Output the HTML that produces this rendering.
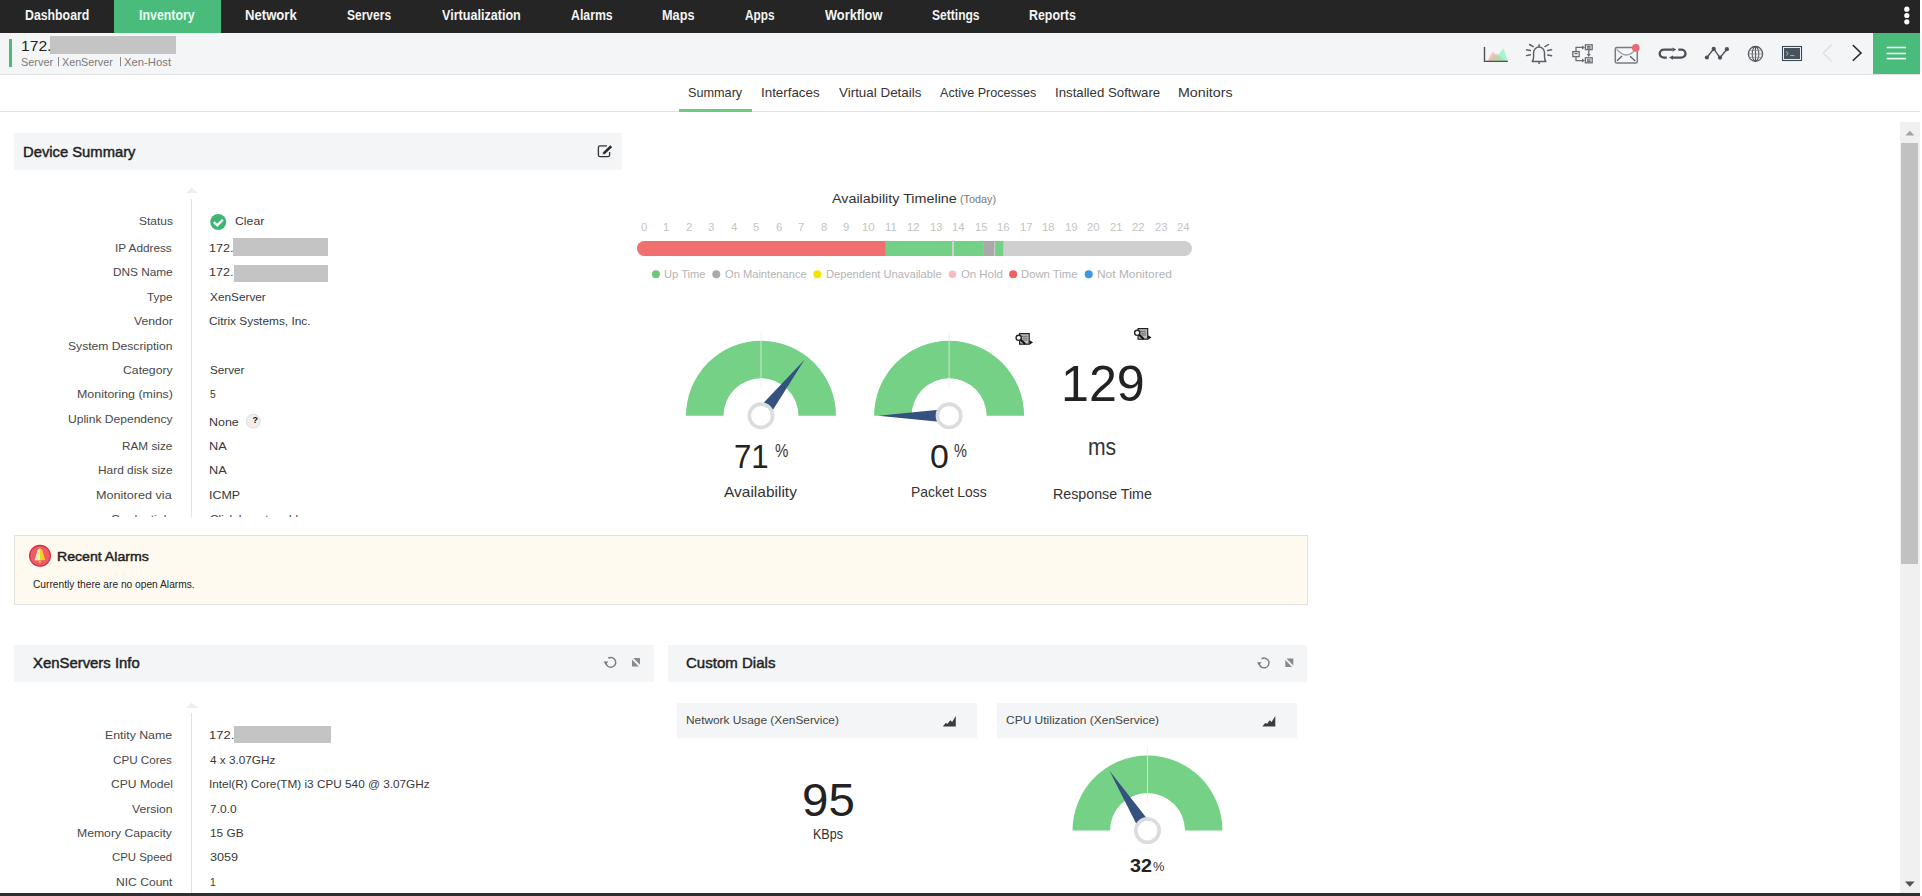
<!DOCTYPE html>
<html><head><meta charset="utf-8"><title>OpManager - Inventory</title>
<style>
*{margin:0;padding:0;box-sizing:border-box}
html,body{width:1922px;height:896px;overflow:hidden;background:#fff;font-family:"Liberation Sans",sans-serif}
.a{position:absolute}
.t{position:absolute;white-space:nowrap;line-height:1.117;transform-origin:0 0}
#nav{left:0;top:0;width:1920px;height:33px;background:#252525}
#navact{left:114px;top:0;width:107px;height:33px;background:#49bb7b}
#sub{left:0;top:33px;width:1920px;height:42px;background:#f4f5f7;border-bottom:1px solid #dfe0e2}
#tabs{left:0;top:75px;width:1920px;height:37px;background:#fff;border-bottom:1px solid #e2e2e2}
.hdr{background:#f4f5f7}
.redact{background:#c4c4c4}
svg{position:absolute;left:0;top:0;overflow:visible}
</style></head>
<body>
<div id="nav" class="a"></div>
<div id="navact" class="a"></div>
<div id="sub" class="a"></div>
<div class="a" style="left:9px;top:39px;width:3px;height:28px;background:#4dba7c"></div>
<div class="a redact" style="left:50px;top:36px;width:126px;height:17.5px"></div>
<div class="a" style="left:1873px;top:33px;width:47px;height:41px;background:#49bb7b"></div>
<div id="tabs" class="a"></div>
<div class="a" style="left:679px;top:109px;width:73px;height:3px;background:#6dcb7f"></div>

<!-- Device summary -->
<div class="a hdr" style="left:14px;top:133px;width:608px;height:37px"></div>
<div class="a" style="left:191px;top:199px;width:1px;height:318px;background:#e2e2e2"></div>
<div class="a redact" style="left:232.6px;top:238.2px;width:95.2px;height:17.4px"></div>
<div class="a redact" style="left:234px;top:265.1px;width:93.8px;height:16.8px"></div>

<!-- Alarms -->
<div class="a" style="left:14px;top:535px;width:1294px;height:70px;background:#fffaf0;border:1px solid #e4e1da"></div>

<!-- Xenservers -->
<div class="a hdr" style="left:14px;top:645px;width:639.5px;height:36.5px"></div>
<div class="a" style="left:191px;top:713px;width:1px;height:183px;background:#e2e2e2"></div>
<div class="a redact" style="left:233.6px;top:726.1px;width:97.4px;height:16.6px"></div>

<!-- Custom dials -->
<div class="a hdr" style="left:668px;top:645px;width:639px;height:36.5px"></div>
<div class="a hdr" style="left:677px;top:703px;width:300px;height:35px"></div>
<div class="a hdr" style="left:997px;top:703px;width:300px;height:35px"></div>

<!-- scrollbar -->
<div class="a" style="left:1900px;top:122px;width:20px;height:771px;background:#f0f0f0"></div>
<div class="a" style="left:1901px;top:143px;width:17px;height:421px;background:#c1c1c1"></div>
<div class="a" style="left:0;top:893px;width:1920px;height:3px;background:#2f2f2f"></div>

<div class="t" style="left:24.86px;top:8.33px;font-size:14px;color:#f4f4f4;font-weight:bold;transform:scaleX(0.8792);">Dashboard</div>
<div class="t" style="left:245.21px;top:8.33px;font-size:14px;color:#f4f4f4;font-weight:bold;transform:scaleX(0.9367);">Network</div>
<div class="t" style="left:347.36px;top:8.33px;font-size:14px;color:#f4f4f4;font-weight:bold;transform:scaleX(0.8578);">Servers</div>
<div class="t" style="left:442.00px;top:8.33px;font-size:14px;color:#f4f4f4;font-weight:bold;transform:scaleX(0.8987);">Virtualization</div>
<div class="t" style="left:570.75px;top:8.33px;font-size:14px;color:#f4f4f4;font-weight:bold;transform:scaleX(0.8783);">Alarms</div>
<div class="t" style="left:661.94px;top:8.33px;font-size:14px;color:#f4f4f4;font-weight:bold;transform:scaleX(0.9088);">Maps</div>
<div class="t" style="left:744.56px;top:8.33px;font-size:14px;color:#f4f4f4;font-weight:bold;transform:scaleX(0.8418);">Apps</div>
<div class="t" style="left:824.80px;top:8.33px;font-size:14px;color:#f4f4f4;font-weight:bold;transform:scaleX(0.9144);">Workflow</div>
<div class="t" style="left:932.26px;top:8.33px;font-size:14px;color:#f4f4f4;font-weight:bold;transform:scaleX(0.8615);">Settings</div>
<div class="t" style="left:1029.26px;top:8.33px;font-size:14px;color:#f4f4f4;font-weight:bold;transform:scaleX(0.8846);">Reports</div>
<div class="t" style="left:139.26px;top:8.33px;font-size:14px;color:#e8fff0;font-weight:bold;transform:scaleX(0.8839);">Inventory</div>
<div class="t" style="left:21.20px;top:38.12px;font-size:15px;color:#222;transform:scaleX(1.0437);">172.</div>
<div class="t" style="left:21.46px;top:56.45px;font-size:11px;color:#7a7a7a;transform:scaleX(0.9932);">Server</div>
<div class="t" style="left:62.09px;top:56.45px;font-size:11px;color:#7a7a7a;transform:scaleX(0.9766);">XenServer</div>
<div class="t" style="left:124.07px;top:56.45px;font-size:11px;color:#7a7a7a;transform:scaleX(1.0272);">Xen-Host</div>
<div class="t" style="left:687.79px;top:85.48px;font-size:13.5px;color:#333;transform:scaleX(0.9385);">Summary</div>
<div class="t" style="left:760.80px;top:85.48px;font-size:13.5px;color:#333;transform:scaleX(0.9886);">Interfaces</div>
<div class="t" style="left:839.00px;top:85.48px;font-size:13.5px;color:#333;transform:scaleX(0.9924);">Virtual Details</div>
<div class="t" style="left:940.00px;top:85.48px;font-size:13.5px;color:#333;transform:scaleX(0.9308);">Active Processes</div>
<div class="t" style="left:1054.81px;top:85.48px;font-size:13.5px;color:#333;transform:scaleX(0.9801);">Installed Software</div>
<div class="t" style="left:1177.86px;top:85.48px;font-size:13.5px;color:#333;transform:scaleX(1.0541);">Monitors</div>
<div class="t" style="left:23.22px;top:143.72px;font-size:15px;color:#222;-webkit-text-stroke:0.45px currentColor;transform:scaleX(0.9850);">Device Summary</div>
<div class="t" style="left:138.62px;top:215.29px;font-size:11.5px;color:#484848;transform:scaleX(1.0410);">Status</div>
<div class="t" style="left:114.94px;top:241.99px;font-size:11.5px;color:#484848;transform:scaleX(1.0243);">IP Address</div>
<div class="t" style="left:112.96px;top:266.09px;font-size:11.5px;color:#484848;transform:scaleX(1.0261);">DNS Name</div>
<div class="t" style="left:147.17px;top:290.79px;font-size:11.5px;color:#484848;transform:scaleX(1.0212);">Type</div>
<div class="t" style="left:133.60px;top:314.89px;font-size:11.5px;color:#484848;transform:scaleX(1.0634);">Vendor</div>
<div class="t" style="left:68.41px;top:340.39px;font-size:11.5px;color:#484848;transform:scaleX(1.0546);">System Description</div>
<div class="t" style="left:122.59px;top:364.29px;font-size:11.5px;color:#484848;transform:scaleX(1.0632);">Category</div>
<div class="t" style="left:76.91px;top:387.89px;font-size:11.5px;color:#484848;transform:scaleX(1.0802);">Monitoring (mins)</div>
<div class="t" style="left:67.66px;top:412.99px;font-size:11.5px;color:#484848;transform:scaleX(1.0483);">Uplink Dependency</div>
<div class="t" style="left:122.26px;top:440.19px;font-size:11.5px;color:#484848;transform:scaleX(1.0237);">RAM size</div>
<div class="t" style="left:98.05px;top:463.89px;font-size:11.5px;color:#484848;transform:scaleX(1.0327);">Hard disk size</div>
<div class="t" style="left:96.49px;top:488.89px;font-size:11.5px;color:#484848;transform:scaleX(1.0960);">Monitored via</div>
<div class="t" style="left:234.89px;top:215.29px;font-size:11.5px;color:#383838;transform:scaleX(1.0652);">Clear</div>
<div class="t" style="left:209.12px;top:241.99px;font-size:11.5px;color:#383838;transform:scaleX(1.0988);">172.</div>
<div class="t" style="left:209.12px;top:266.09px;font-size:11.5px;color:#383838;transform:scaleX(1.0988);">172.</div>
<div class="t" style="left:209.76px;top:290.79px;font-size:11.5px;color:#383838;transform:scaleX(1.0268);">XenServer</div>
<div class="t" style="left:209.41px;top:314.89px;font-size:11.5px;color:#383838;transform:scaleX(1.0319);">Citrix Systems, Inc.</div>
<div class="t" style="left:209.83px;top:364.29px;font-size:11.5px;color:#383838;transform:scaleX(1.0192);">Server</div>
<div class="t" style="left:210.09px;top:387.89px;font-size:11.5px;color:#383838;transform:scaleX(0.9000);">5</div>
<div class="t" style="left:209.30px;top:415.89px;font-size:11.5px;color:#383838;transform:scaleX(1.0820);">None</div>
<div class="t" style="left:209.28px;top:440.19px;font-size:11.5px;color:#383838;transform:scaleX(1.1067);">NA</div>
<div class="t" style="left:209.28px;top:463.89px;font-size:11.5px;color:#383838;transform:scaleX(1.1067);">NA</div>
<div class="t" style="left:209.18px;top:488.89px;font-size:11.5px;color:#383838;transform:scaleX(1.0819);">ICMP</div>
<div class="t" style="left:111.09px;top:513.29px;font-size:11.5px;color:#484848;transform:scaleX(1.0568);">Credentials</div>
<div class="t" style="left:209.71px;top:513.29px;font-size:11.5px;color:#383838;transform:scaleX(1.0191);">Click here to add</div>
<div class="t" style="left:832.40px;top:191.28px;font-size:13.5px;color:#333;transform:scaleX(1.0613);">Availability Timeline</div>
<div class="t" style="left:959.75px;top:194.00px;font-size:10.5px;color:#777;transform:scaleX(1.0288);">(Today)</div>
<div class="t" style="left:640.68px;top:220.54px;font-size:11px;color:#c4c4c4;transform:scaleX(1.0300);">0</div>
<div class="t" style="left:663.01px;top:220.54px;font-size:11px;color:#c4c4c4;transform:scaleX(1.0300);">1</div>
<div class="t" style="left:685.63px;top:220.54px;font-size:11px;color:#c4c4c4;transform:scaleX(1.0300);">2</div>
<div class="t" style="left:708.18px;top:220.54px;font-size:11px;color:#c4c4c4;transform:scaleX(1.0300);">3</div>
<div class="t" style="left:730.68px;top:220.54px;font-size:11px;color:#c4c4c4;transform:scaleX(1.0300);">4</div>
<div class="t" style="left:753.13px;top:220.54px;font-size:11px;color:#c4c4c4;transform:scaleX(1.0300);">5</div>
<div class="t" style="left:775.57px;top:220.54px;font-size:11px;color:#c4c4c4;transform:scaleX(1.0300);">6</div>
<div class="t" style="left:798.13px;top:220.54px;font-size:11px;color:#c4c4c4;transform:scaleX(1.0300);">7</div>
<div class="t" style="left:820.63px;top:220.54px;font-size:11px;color:#c4c4c4;transform:scaleX(1.0300);">8</div>
<div class="t" style="left:843.18px;top:220.54px;font-size:11px;color:#c4c4c4;transform:scaleX(1.0300);">9</div>
<div class="t" style="left:862.31px;top:220.54px;font-size:11px;color:#c4c4c4;transform:scaleX(1.0300);">10</div>
<div class="t" style="left:885.28px;top:220.54px;font-size:11px;color:#c4c4c4;transform:scaleX(1.0300);">11</div>
<div class="t" style="left:907.36px;top:220.54px;font-size:11px;color:#c4c4c4;transform:scaleX(1.0300);">12</div>
<div class="t" style="left:929.81px;top:220.54px;font-size:11px;color:#c4c4c4;transform:scaleX(1.0300);">13</div>
<div class="t" style="left:952.25px;top:220.54px;font-size:11px;color:#c4c4c4;transform:scaleX(1.0300);">14</div>
<div class="t" style="left:974.81px;top:220.54px;font-size:11px;color:#c4c4c4;transform:scaleX(1.0300);">15</div>
<div class="t" style="left:997.31px;top:220.54px;font-size:11px;color:#c4c4c4;transform:scaleX(1.0300);">16</div>
<div class="t" style="left:1019.86px;top:220.54px;font-size:11px;color:#c4c4c4;transform:scaleX(1.0300);">17</div>
<div class="t" style="left:1042.31px;top:220.54px;font-size:11px;color:#c4c4c4;transform:scaleX(1.0300);">18</div>
<div class="t" style="left:1064.86px;top:220.54px;font-size:11px;color:#c4c4c4;transform:scaleX(1.0300);">19</div>
<div class="t" style="left:1087.42px;top:220.54px;font-size:11px;color:#c4c4c4;transform:scaleX(1.0300);">20</div>
<div class="t" style="left:1109.98px;top:220.54px;font-size:11px;color:#c4c4c4;transform:scaleX(1.0300);">21</div>
<div class="t" style="left:1132.48px;top:220.54px;font-size:11px;color:#c4c4c4;transform:scaleX(1.0300);">22</div>
<div class="t" style="left:1154.92px;top:220.54px;font-size:11px;color:#c4c4c4;transform:scaleX(1.0300);">23</div>
<div class="t" style="left:1177.36px;top:220.54px;font-size:11px;color:#c4c4c4;transform:scaleX(1.0300);">24</div>
<div class="t" style="left:664.02px;top:267.75px;font-size:11px;color:#b4b4b4;transform:scaleX(1.0154);">Up Time</div>
<div class="t" style="left:724.75px;top:267.75px;font-size:11px;color:#b4b4b4;transform:scaleX(1.0115);">On Maintenance</div>
<div class="t" style="left:825.81px;top:267.75px;font-size:11px;color:#b4b4b4;transform:scaleX(1.0108);">Dependent Unavailable</div>
<div class="t" style="left:960.74px;top:267.75px;font-size:11px;color:#b4b4b4;transform:scaleX(1.0357);">On Hold</div>
<div class="t" style="left:1021.30px;top:267.75px;font-size:11px;color:#b4b4b4;transform:scaleX(1.0253);">Down Time</div>
<div class="t" style="left:1096.75px;top:267.75px;font-size:11px;color:#b4b4b4;transform:scaleX(1.0845);">Not Monitored</div>
<div class="t" style="left:734.04px;top:438.94px;font-size:33px;color:#222;transform:scaleX(0.9453);">71</div>
<div class="t" style="left:774.75px;top:440.71px;font-size:18px;color:#333;transform:scaleX(0.8367);">%</div>
<div class="t" style="left:929.98px;top:438.94px;font-size:33px;color:#222;transform:scaleX(1.0266);">0</div>
<div class="t" style="left:953.96px;top:440.71px;font-size:18px;color:#333;transform:scaleX(0.8099);">%</div>
<div class="t" style="left:724.30px;top:484.43px;font-size:15px;color:#333;transform:scaleX(1.0327);">Availability</div>
<div class="t" style="left:910.79px;top:484.43px;font-size:15px;color:#333;transform:scaleX(0.9268);">Packet Loss</div>
<div class="t" style="left:1061.49px;top:356.85px;font-size:50px;color:#222;transform:scaleX(1.0037);">129</div>
<div class="t" style="left:1087.63px;top:435.19px;font-size:23px;color:#333;transform:scaleX(0.9199);">ms</div>
<div class="t" style="left:1052.66px;top:484.97px;font-size:15.5px;color:#333;transform:scaleX(0.9183);">Response Time</div>
<div class="t" style="left:56.67px;top:548.98px;font-size:13.5px;color:#222;-webkit-text-stroke:0.45px currentColor;transform:scaleX(1.0455);">Recent Alarms</div>
<div class="t" style="left:32.69px;top:578.85px;font-size:10px;color:#222;transform:scaleX(1.0204);">Currently there are no open Alarms.</div>
<div class="t" style="left:33.10px;top:655.02px;font-size:15px;color:#222;-webkit-text-stroke:0.45px currentColor;transform:scaleX(0.9924);">XenServers Info</div>
<div class="t" style="left:105.42px;top:729.49px;font-size:11.5px;color:#484848;transform:scaleX(1.0702);">Entity Name</div>
<div class="t" style="left:209.49px;top:729.49px;font-size:11.5px;color:#383838;transform:scaleX(1.1280);">172.</div>
<div class="t" style="left:113.42px;top:754.39px;font-size:11.5px;color:#484848;transform:scaleX(1.0134);">CPU Cores</div>
<div class="t" style="left:210.17px;top:754.39px;font-size:11.5px;color:#383838;transform:scaleX(1.0217);">4 x 3.07GHz</div>
<div class="t" style="left:110.79px;top:778.39px;font-size:11.5px;color:#484848;transform:scaleX(1.0538);">CPU Model</div>
<div class="t" style="left:209.34px;top:778.39px;font-size:11.5px;color:#383838;transform:scaleX(1.0236);">Intel(R) Core(TM) i3 CPU 540 @ 3.07GHz</div>
<div class="t" style="left:132.20px;top:803.29px;font-size:11.5px;color:#484848;transform:scaleX(1.0554);">Version</div>
<div class="t" style="left:209.80px;top:803.29px;font-size:11.5px;color:#383838;transform:scaleX(1.0412);">7.0.0</div>
<div class="t" style="left:77.12px;top:827.49px;font-size:11.5px;color:#484848;transform:scaleX(1.0604);">Memory Capacity</div>
<div class="t" style="left:209.57px;top:827.49px;font-size:11.5px;color:#383838;transform:scaleX(1.0334);">15 GB</div>
<div class="t" style="left:112.43px;top:851.09px;font-size:11.5px;color:#484848;transform:scaleX(0.9915);">CPU Speed</div>
<div class="t" style="left:210.02px;top:851.09px;font-size:11.5px;color:#383838;transform:scaleX(1.1009);">3059</div>
<div class="t" style="left:115.53px;top:876.39px;font-size:11.5px;color:#484848;transform:scaleX(1.0513);">NIC Count</div>
<div class="t" style="left:209.68px;top:876.39px;font-size:11.5px;color:#383838;transform:scaleX(0.9000);">1</div>
<div class="t" style="left:686.05px;top:655.02px;font-size:15px;color:#222;-webkit-text-stroke:0.45px currentColor;transform:scaleX(1.0024);">Custom Dials</div>
<div class="t" style="left:685.65px;top:714.29px;font-size:11.5px;color:#444;transform:scaleX(1.0310);">Network Usage (XenService)</div>
<div class="t" style="left:1005.60px;top:714.29px;font-size:11.5px;color:#444;transform:scaleX(1.0411);">CPU Utilization (XenService)</div>
<div class="t" style="left:801.60px;top:774.37px;font-size:47px;color:#222;transform:scaleX(1.0103);">95</div>
<div class="t" style="left:812.90px;top:827.13px;font-size:14px;color:#333;transform:scaleX(0.8959);">KBps</div>
<div class="t" style="left:1130.21px;top:856.01px;font-size:18px;color:#222;font-weight:bold;transform:scaleX(1.0941);">32</div>
<div class="t" style="left:1153.37px;top:860.99px;font-size:12.5px;color:#333;transform:scaleX(1.0265);">%</div>
<div class="a" style="left:14px;top:517px;width:640px;height:18px;background:#fff"></div>

<svg width="1922" height="896" viewBox="0 0 1922 896">
<path d="M686,415.8 A75,75 0 0 1 836,415.8 L798.5,415.8 A37.5,37.5 0 0 0 723.5,415.8 Z" fill="#74d186"/><line x1="761" y1="331.8" x2="761" y2="387.8" stroke="#ececec" stroke-width="1" opacity="0.75"/><polygon points="804.52,359.70 755.47,411.51 766.53,420.09" fill="#34517f"/><circle cx="761" cy="415.8" r="11.7" fill="#fff" stroke="#dcdcdc" stroke-width="3.6"/><path d="M874.1,415.8 A75,75 0 0 1 1024.1,415.8 L986.6,415.8 A37.5,37.5 0 0 0 911.6,415.8 Z" fill="#74d186"/><line x1="949.1" y1="331.8" x2="949.1" y2="387.8" stroke="#ececec" stroke-width="1" opacity="0.75"/><polygon points="878.10,415.80 949.10,422.80 949.10,408.80" fill="#34517f"/><circle cx="949.1" cy="415.8" r="11.7" fill="#fff" stroke="#dcdcdc" stroke-width="3.6"/><path d="M1072.5,830.6 A75,75 0 0 1 1222.5,830.6 L1185.0,830.6 A37.5,37.5 0 0 0 1110.0,830.6 Z" fill="#74d186"/><line x1="1147.5" y1="746.6" x2="1147.5" y2="802.6" stroke="#ececec" stroke-width="1" opacity="0.75"/><polygon points="1109.46,770.65 1141.59,834.35 1153.41,826.85" fill="#34517f"/><circle cx="1147.5" cy="830.6" r="11.7" fill="#fff" stroke="#dcdcdc" stroke-width="3.6"/><!-- nav three dots -->
<circle cx="1906.8" cy="9.2" r="2.6" fill="#fff"/>
<circle cx="1906.8" cy="15.5" r="2.6" fill="#fff"/>
<circle cx="1906.8" cy="21.8" r="2.6" fill="#fff"/>
<!-- subheader separators -->
<line x1="58.5" y1="57" x2="58.5" y2="66.3" stroke="#8a8a8a" stroke-width="1"/>
<line x1="120.5" y1="57" x2="120.5" y2="66.3" stroke="#8a8a8a" stroke-width="1"/>
<!-- icon1 chart -->
<polygon points="1487.2,61 1493,51.6 1500,61" fill="#f9c2c2"/>
<polygon points="1493,61 1503.4,48.4 1508,61" fill="#a9f3cf"/>
<polygon points="1488.5,61 1496.5,53.4 1505.5,61" fill="#bccb98" opacity="0.6"/>
<path d="M1484.5,47 V61.4 H1507.8" fill="none" stroke="#4f4f4f" stroke-width="1.4"/>
<!-- icon2 bell -->
<g fill="none" stroke="#5b5f66" stroke-width="1.45" stroke-linecap="round">
<path d="M1532.2,61.5 Q1533.6,60 1533.6,56.5 V52.6 A5.45,5.6 0 0 1 1544.5,52.6 V56.5 Q1544.5,60 1545.9,61.5 Z" stroke-linejoin="round"/>
<path d="M1529.6,44.5 L1533.2,46.6 M1526.5,49.8 L1530.4,50.5 M1526.5,55.6 L1530.4,54.7 M1548.5,44.5 L1545,46.6 M1551.6,49.8 L1547.7,50.5 M1551.6,55.8 L1547.7,55"/>
</g>
<rect x="1538.3" y="44.3" width="1.6" height="2.4" fill="#5b5f66"/>
<rect x="1538.2" y="62.2" width="1.8" height="1.6" fill="#5b5f66"/>
<!-- icon3 flow -->
<g fill="none" stroke="#6a6e74" stroke-width="1.3">
<rect x="1572.8" y="51.6" width="6.4" height="5" />
<rect x="1585.4" y="44.8" width="6.8" height="4.8" />
<rect x="1585.4" y="57.8" width="6.8" height="5" />
<path d="M1574.5,53.6 H1577.5 M1587,46.6 H1590.6 M1587,48.2 H1590.6 M1587,59.8 H1590.6 M1587,61.4 H1590.6"/>
<path d="M1576,51.4 V47.4 H1582.5 M1576,56.8 V60.6 H1582.5 M1588.8,49.8 V54.5"/>
</g>
<polygon points="1582,45.4 1585,47.4 1582,49.4" fill="#6a6e74"/>
<polygon points="1582,58.6 1585,60.6 1582,62.6" fill="#6a6e74"/>
<polygon points="1586.8,54 1590.8,54 1588.8,57" fill="#6a6e74"/>
<!-- icon4 mail -->
<rect x="1615.3" y="47.6" width="22" height="15.4" rx="1.6" fill="none" stroke="#777b81" stroke-width="1.5"/>
<path d="M1616.8,49.4 Q1626.3,60.6 1635.6,49.4" fill="none" stroke="#9a9ea4" stroke-width="1.3"/>
<path d="M1617.1,60.8 L1622,56 M1635.2,61 L1630.1,56.2" fill="none" stroke="#5a5e64" stroke-width="1.3"/>
<circle cx="1635.8" cy="47.9" r="3.8" fill="#ea6a70"/>
<!-- icon5 loop -->
<g fill="none" stroke="#4b5159" stroke-width="2.4">
<path d="M1672.2,49.6 H1664 A4.3,4 0 0 0 1664,57.6 H1666.8"/>
<path d="M1678.3,49.6 H1681.2 A4.3,4 0 0 1 1681.2,57.6 H1672"/>
</g>
<polygon points="1672.4,47.4 1676.3,49.6 1672.4,51.8" fill="#4b5159"/>
<polygon points="1673,55.4 1669,57.6 1673,59.8" fill="#4b5159"/>
<!-- icon6 line graph -->
<polyline points="1706.9,57.5 1713.7,48.9 1720,57.7 1726.9,49.2" fill="none" stroke="#4b5159" stroke-width="1.4"/>
<circle cx="1706.9" cy="57.5" r="2.1" fill="#4b5159"/>
<circle cx="1713.7" cy="48.9" r="2.1" fill="#4b5159"/>
<circle cx="1720" cy="57.7" r="2.1" fill="#4b5159"/>
<circle cx="1726.9" cy="49.2" r="2.1" fill="#4b5159"/>
<!-- icon7 globe -->
<g fill="none" stroke="#55595f">
<ellipse cx="1755.5" cy="53.9" rx="7.1" ry="7.4" stroke-width="1.3"/>
<ellipse cx="1755.5" cy="53.9" rx="3.3" ry="7.3" stroke-width="1.1"/>
<path d="M1755.5,46.6 V61.2" stroke-width="1.2"/>
<path d="M1749,50.4 H1762 M1748.4,53.9 H1762.6 M1749,57.4 H1762" stroke-width="0.7" stroke="#7a7e84"/>
</g>
<!-- icon8 terminal -->
<rect x="1782.5" y="46.5" width="19" height="14" fill="none" stroke="#3e4852" stroke-width="1.1"/>
<rect x="1784" y="48" width="16" height="11" fill="#46535f"/>
<path d="M1786,51.5 L1788.3,53.5 L1786,55.5" fill="none" stroke="#b9c3ca" stroke-width="0.9"/>
<line x1="1790.2" y1="55.6" x2="1794.4" y2="55.6" stroke="#b9c3ca" stroke-width="0.9"/>
<!-- chevrons -->
<polyline points="1831.8,44.6 1823.2,53.1 1831.8,61.6" fill="none" stroke="#dedede" stroke-width="1.4"/>
<polyline points="1852.8,45 1861,53 1852.8,60.8" fill="none" stroke="#222" stroke-width="1.5"/>
<!-- hamburger -->
<g stroke="#f0fff5" stroke-width="1.6">
<line x1="1886.6" y1="47.5" x2="1906" y2="47.5"/>
<line x1="1886.6" y1="53.5" x2="1906" y2="53.5"/>
<line x1="1886.6" y1="58.6" x2="1906" y2="58.6"/>
</g>
<!-- edit icon -->
<path d="M607,145.8 H600 Q598.4,145.8 598.4,147.4 V155 Q598.4,156.6 600,156.6 H608 Q609.6,156.6 609.6,155 V152" fill="none" stroke="#333" stroke-width="1.3"/>
<path d="M603.5,153.6 L611.2,146.2" stroke="#2a2a2a" stroke-width="2.6"/>
<polygon points="602.6,154.6 603.4,151.8 605.2,153.6" fill="#4a4a2a"/>
<!-- triangle markers -->
<polygon points="191.6,187.4 186.4,193 198,193" fill="#efefef"/>
<polygon points="191.6,702.4 186.4,708 198,708" fill="#efefef"/>
<!-- status check -->
<circle cx="218.2" cy="222" r="8" fill="#3fb574"/>
<polyline points="213.8,222.2 217.2,225.4 222.8,219.8" fill="none" stroke="#fff" stroke-width="2.3"/>
<!-- question circle -->
<circle cx="253.3" cy="421.2" r="7" fill="#efefef" stroke="#e0e0e0" stroke-width="1"/>
<text x="252.4" y="423.2" font-family="Liberation Sans" font-size="9" font-weight="bold" fill="#111">?</text>
<!-- timeline bar -->
<defs><clipPath id="barclip"><rect x="637" y="241" width="555" height="15" rx="7.5"/></clipPath></defs>
<g clip-path="url(#barclip)">
<rect x="637" y="241" width="555" height="15" fill="#cfcfcf"/>
<rect x="637" y="241" width="248.8" height="15" fill="#f07070"/>
<rect x="885.8" y="241" width="66.2" height="15" fill="#72d184"/>
<rect x="954" y="241" width="29.3" height="15" fill="#72d184"/>
<rect x="983.3" y="241" width="10.9" height="15" fill="#aaa8aa"/>
<rect x="995.2" y="241" width="8" height="15" fill="#72d184"/>
</g>
<!-- legend dots -->
<circle cx="655.9" cy="274.2" r="4" fill="#6cc97a"/>
<circle cx="716.3" cy="274.2" r="4" fill="#a9a9a9"/>
<circle cx="817.3" cy="274.2" r="4" fill="#f2e400"/>
<circle cx="952.5" cy="274.2" r="3.8" fill="#f8bcc4"/>
<circle cx="1013.1" cy="274.2" r="4" fill="#ef6262"/>
<circle cx="1088.7" cy="274.2" r="4" fill="#3a98e6"/>
<!-- report icons -->
<g id="rep">
<rect x="1019.6" y="333.6" width="9.6" height="10.6" fill="#bdbdbd" stroke="#222" stroke-width="1.2"/>
<path d="M1021.6,336.3 H1027.4 M1022.6,338.2 H1027.4 M1022.6,340 H1027.4" stroke="#555" stroke-width="0.8"/>
<circle cx="1018.7" cy="337.8" r="2.6" fill="#fff" stroke="#222" stroke-width="1.4"/>
<path d="M1020.6,339.8 L1025.2,344" stroke="#111" stroke-width="2"/>
<polygon points="1029.6,340.2 1033,342.4 1029.6,344.6" fill="#111"/>
</g>
<use href="#rep" transform="translate(118.5,-5)"/>
<!-- bell alarm -->
<circle cx="40" cy="555.8" r="10.4" fill="#ee5a6a" stroke="#d42a3e" stroke-width="1.2"/>
<path d="M40,548.4 Q42.6,548.6 43,552.6 L45.4,560.2 H34.6 L37,552.6 Q37.4,548.6 40,548.4 Z" fill="#f8cf22"/>
<path d="M40,548.4 Q37.4,548.6 37,552.6 L34.6,560.2 H40 Z" fill="#fff0b0"/>
<circle cx="40" cy="561.8" r="1.1" fill="#f8cf22"/>
<!-- refresh/expand icons -->
<g id="rx">
<path d="M605.9,662.6 A4.9,4.9 0 1 0 608.2,658.2" fill="none" stroke="#7a7a7a" stroke-width="1.4"/>
<polygon points="603.6,661.6 608.2,661.6 605.9,664.9" fill="#7a7a7a"/>
<polygon points="633.2,658 640,658 640,664.8" fill="#8a8a8a"/>
<polygon points="632,659.4 632,666.4 638.8,666.4" fill="#8a8a8a"/>
</g>
<use href="#rx" transform="translate(653.3,0.6)"/>
<!-- dial chart icons -->
<polygon points="942.8,726.6 945.7,723 947.6,723.8 950.3,720.3 952.1,721.9 955.8,716 955.8,726.6" fill="#3d3d3d"/>
<polygon points="1262.3,726.6 1265.2,723 1267.1,723.8 1269.8,720.3 1271.6,721.9 1275.3,716 1275.3,726.6" fill="#3d3d3d"/>
<!-- scrollbar arrows -->
<polygon points="1905.4,135.6 1914.4,135.6 1909.9,130.8" fill="#a3a3a3"/>
<polygon points="1905,881.6 1914.6,881.6 1909.8,886.8" fill="#505050"/>

</svg>
</body></html>
